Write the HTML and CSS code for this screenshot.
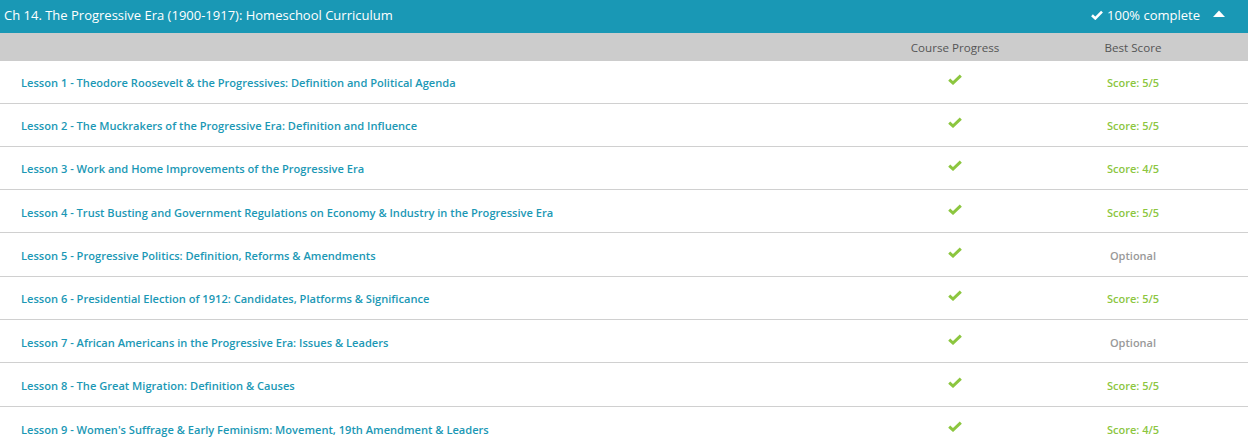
FILE: index.html
```html
<!DOCTYPE html>
<html>
<head>
<meta charset="utf-8">
<link rel="stylesheet" href="styles.css">
</head>
<body>
<div class="chapter">
  <div class="chapter-head">
    <span class="chapter-title">Ch 14. The Progressive Era (1900-1917): Homeschool Curriculum</span>
    <span class="chapter-status">
      <svg class="head-check" viewBox="0 0 12 10" width="12" height="10"><path d="M1 5.2 L4.3 8.4 L11 1.6" fill="none" stroke="#fff" stroke-width="2.6"/></svg>
      100% complete
      <svg class="caret" viewBox="0 0 12 7" width="12" height="7"><path d="M0 7 L6 0.5 L12 7 Z" fill="#fff"/></svg>
    </span>
  </div>
  <div class="cols-head">
    <span></span>
    <span class="col">Course Progress</span>
    <span class="col">Best Score</span>
  </div>
  <div class="lessons">
    <div class="row"><a class="title">Lesson 1 - Theodore Roosevelt &amp; the Progressives: Definition and Political Agenda</a><span class="prog"><svg viewBox="0 0 14 11" width="14" height="11"><path d="M1.2 5.6 L5 9 L12.8 1.6" fill="none" stroke="#8cc63f" stroke-width="3"/></svg></span><span class="score">Score: 5/5</span></div>
    <div class="row"><a class="title">Lesson 2 - The Muckrakers of the Progressive Era: Definition and Influence</a><span class="prog"><svg viewBox="0 0 14 11" width="14" height="11"><path d="M1.2 5.6 L5 9 L12.8 1.6" fill="none" stroke="#8cc63f" stroke-width="3"/></svg></span><span class="score">Score: 5/5</span></div>
    <div class="row"><a class="title">Lesson 3 - Work and Home Improvements of the Progressive Era</a><span class="prog"><svg viewBox="0 0 14 11" width="14" height="11"><path d="M1.2 5.6 L5 9 L12.8 1.6" fill="none" stroke="#8cc63f" stroke-width="3"/></svg></span><span class="score">Score: 4/5</span></div>
    <div class="row"><a class="title">Lesson 4 - Trust Busting and Government Regulations on Economy &amp; Industry in the Progressive Era</a><span class="prog"><svg viewBox="0 0 14 11" width="14" height="11"><path d="M1.2 5.6 L5 9 L12.8 1.6" fill="none" stroke="#8cc63f" stroke-width="3"/></svg></span><span class="score">Score: 5/5</span></div>
    <div class="row"><a class="title">Lesson 5 - Progressive Politics: Definition, Reforms &amp; Amendments</a><span class="prog"><svg viewBox="0 0 14 11" width="14" height="11"><path d="M1.2 5.6 L5 9 L12.8 1.6" fill="none" stroke="#8cc63f" stroke-width="3"/></svg></span><span class="score optional">Optional</span></div>
    <div class="row"><a class="title">Lesson 6 - Presidential Election of 1912: Candidates, Platforms &amp; Significance</a><span class="prog"><svg viewBox="0 0 14 11" width="14" height="11"><path d="M1.2 5.6 L5 9 L12.8 1.6" fill="none" stroke="#8cc63f" stroke-width="3"/></svg></span><span class="score">Score: 5/5</span></div>
    <div class="row"><a class="title">Lesson 7 - African Americans in the Progressive Era: Issues &amp; Leaders</a><span class="prog"><svg viewBox="0 0 14 11" width="14" height="11"><path d="M1.2 5.6 L5 9 L12.8 1.6" fill="none" stroke="#8cc63f" stroke-width="3"/></svg></span><span class="score optional">Optional</span></div>
    <div class="row"><a class="title">Lesson 8 - The Great Migration: Definition &amp; Causes</a><span class="prog"><svg viewBox="0 0 14 11" width="14" height="11"><path d="M1.2 5.6 L5 9 L12.8 1.6" fill="none" stroke="#8cc63f" stroke-width="3"/></svg></span><span class="score">Score: 5/5</span></div>
    <div class="row"><a class="title">Lesson 9 - Women's Suffrage &amp; Early Feminism: Movement, 19th Amendment &amp; Leaders</a><span class="prog"><svg viewBox="0 0 14 11" width="14" height="11"><path d="M1.2 5.6 L5 9 L12.8 1.6" fill="none" stroke="#8cc63f" stroke-width="3"/></svg></span><span class="score">Score: 4/5</span></div>
  </div>
</div>
</body>
</html>
```

FILE: styles.css
```css
* { box-sizing: border-box; }
html, body { margin: 0; padding: 0; background: #fff; }
body {
  font-family: "Open Sans", "Noto Sans", sans-serif;
  width: 1249px;
  overflow: hidden;
}
.chapter { width: 1248px; }
.chapter-head {
  height: 33px;
  background: #1998b5;
  color: #fff;
  display: flex;
  align-items: center;
  justify-content: space-between;
  padding: 0 23px 4px 4px;
  font-size: 13px;
}
.chapter-status {
  display: flex;
  align-items: center;
}
.head-check { margin-right: 4px; }
.caret { margin-left: 13px; margin-bottom: 3px; }
.cols-head {
  height: 28px;
  background: #cccccc;
  display: grid;
  grid-template-columns: 1fr 178px 178px;
  padding-right: 26px;
  align-items: center;
  font-size: 11.6px;
  color: #555;
}
.col { text-align: center; }
.row {
  height: 43.3px;
  border-bottom: 1px solid #d0d0d0;
  display: grid;
  grid-template-columns: 1fr 178px 178px;
  padding: 2px 26px 0 21px;
  align-items: center;
  font-size: 11px;
  font-weight: 600;
}
.row:first-child { height: 42.5px; }
.row:last-child { border-bottom: none; }
.title { color: #1b98b5; text-decoration: none; font-size: 11.1px; }
.prog { display: flex; justify-content: center; margin-top: -6px; }
.score { text-align: center; color: #8cc63f; }
.score.optional { color: #999; }
```
